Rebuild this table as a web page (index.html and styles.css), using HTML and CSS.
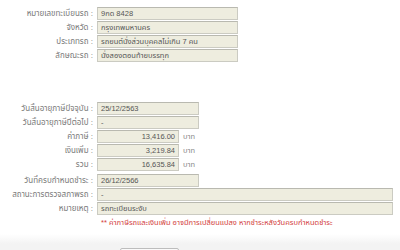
FILE: index.html
```html
<!DOCTYPE html>
<html>
<head>
<meta charset="utf-8">
<link rel="stylesheet" href="styles.css">
</head>
<body>
<div class="page">
  <div class="group">
    <div class="row"><div class="lbl">หมายเลขทะเบียนรถ :</div><div class="box w-car">9กด 8428</div></div>
    <div class="row"><div class="lbl">จังหวัด :</div><div class="box w-car">กรุงเทพมหานคร</div></div>
    <div class="row"><div class="lbl">ประเภทรถ :</div><div class="box w-car">รถยนต์นั่งส่วนบุคคลไม่เกิน 7 คน</div></div>
    <div class="row"><div class="lbl">ลักษณะรถ :</div><div class="box w-car">นั่งสองตอนท้ายบรรทุก</div></div>
  </div>
  <div class="group g2">
    <div class="row"><div class="lbl">วันสิ้นอายุภาษีปัจจุบัน :</div><div class="box w-date">25/12/2563</div></div>
    <div class="row"><div class="lbl">วันสิ้นอายุภาษีปีต่อไป :</div><div class="box w-date">-</div></div>
    <div class="row"><div class="lbl">ค่าภาษี :</div><div class="box w-num num">13,416.00</div><div class="unit">บาท</div></div>
    <div class="row"><div class="lbl">เงินเพิ่ม :</div><div class="box w-num num">3,219.84</div><div class="unit">บาท</div></div>
    <div class="row"><div class="lbl">รวม :</div><div class="box w-num num">16,635.84</div><div class="unit">บาท</div></div>
    <div class="row r-due"><div class="lbl">วันที่ครบกำหนดชำระ :</div><div class="box w-date">26/12/2566</div></div>
    <div class="row"><div class="lbl">สถานะการตรวจสภาพรถ :</div><div class="box w-full">-</div></div>
    <div class="row"><div class="lbl">หมายเหตุ :</div><div class="box w-full">รถทะเบียนระงับ</div></div>
    <div class="note">** ค่าภาษีรถและเงินเพิ่ม อาจมีการเปลี่ยนแปลง หากชำระหลังวันครบกำหนดชำระ</div>
  </div>
  <div class="footer"><div class="btn"></div></div>
</div>
</body>
</html>
```
FILE: styles.css
```css
html, body { margin: 0; padding: 0; background: #fff; }
body { width: 400px; height: 250px; overflow: hidden; font-family: "Liberation Sans", Tahoma, "Noto Sans Thai", "Noto Sans", sans-serif; }
.page { display: flex; flex-direction: column; }
.group { display: flex; flex-direction: column; gap: 1px; padding-top: 7px; }
.g2 { padding-top: 40px; }
.row { display: flex; align-items: center; height: 13px; }
.r-due { margin-top: 2px; }
.lbl { width: 93px; text-align: right; font-size: 8px; line-height: 10px; color: #7a7a7a; padding-right: 4px; white-space: nowrap; }
.box { height: 11px; line-height: 11px; border: 1px solid #cbcbc2; border-top-color: #b9b9b0; background: #eeeddf; font-size: 7.5px; color: #555; padding: 0 3px; box-sizing: content-box; white-space: nowrap; overflow: hidden; }
.w-car { width: 133px; }
.w-date { width: 94px; }
.w-num { width: 74px; }
.w-full { width: 288px; }
.num { text-align: right; font-size: 7.5px; }
.unit { font-size: 7.5px; line-height: 10px; color: #888; padding-left: 4px; }
.note { margin-left: 101px; margin-top: 2px; font-size: 7.5px; line-height: 10px; color: #d23b3b; white-space: nowrap; }
.footer { margin-top: 6px; height: 30px; background: linear-gradient(#fff, #f3f3f3 10px); padding-left: 120px; padding-top: 14px; box-sizing: border-box; }
.btn { width: 57px; height: 16px; border: 1px solid #bdbdbd; background: #fafafa; border-radius: 2px; }
```
